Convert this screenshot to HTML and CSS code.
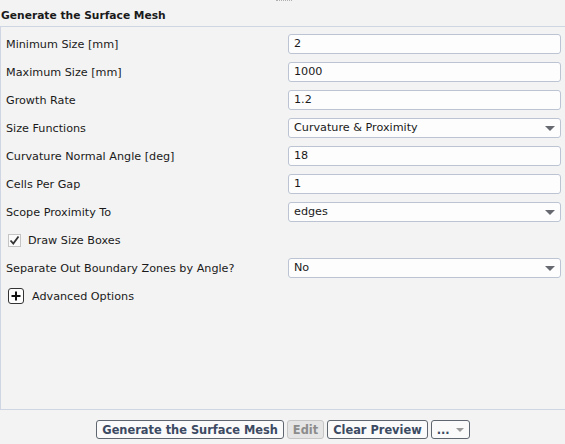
FILE: index.html
```html
<!DOCTYPE html>
<html>
<head>
<meta charset="utf-8">
<link rel="stylesheet" href="styles.css">
</head>
<body>
<div class="grip"></div>
<div class="title">Generate the Surface Mesh</div>
<div class="panel">
  <div class="row"><span class="label">Minimum Size [mm]</span><div class="field">2</div></div>
  <div class="row"><span class="label">Maximum Size [mm]</span><div class="field">1000</div></div>
  <div class="row"><span class="label">Growth Rate</span><div class="field">1.2</div></div>
  <div class="row"><span class="label">Size Functions</span><div class="field select">Curvature &amp; Proximity<span class="caret"></span></div></div>
  <div class="row"><span class="label">Curvature Normal Angle [deg]</span><div class="field">18</div></div>
  <div class="row"><span class="label">Cells Per Gap</span><div class="field">1</div></div>
  <div class="row"><span class="label">Scope Proximity To</span><div class="field select">edges<span class="caret"></span></div></div>
  <div class="row check-row"><span class="checkbox"><svg width="11" height="11" viewBox="0 0 11 11"><path d="M1.5 5.5 L4.3 8.6 L9.5 1.5" fill="none" stroke="#333" stroke-width="1.8"/></svg></span><span>Draw Size Boxes</span></div>
  <div class="row"><span class="label">Separate Out Boundary Zones by Angle?</span><div class="field select">No<span class="caret"></span></div></div>
  <div class="row check-row"><span class="plus"><svg width="10" height="10" viewBox="0 0 10 10"><path d="M5 0.5 V9.5 M0.5 5 H9.5" stroke="#111" stroke-width="2"/></svg></span><span>Advanced Options</span></div>
</div>
<div class="footer">
  <button class="btn">Generate the Surface Mesh</button>
  <button class="btn disabled">Edit</button>
  <button class="btn">Clear Preview</button>
  <button class="btn more">...<span class="caret small"></span></button>
</div>
</body>
</html>
```
FILE: styles.css
```css
html, body {
  margin: 0;
  padding: 0;
  background: #f3f3f3;
  width: 565px;
  height: 444px;
  overflow: hidden;
  font-family: "DejaVu Sans", sans-serif;
  font-size: 11.2px;
  color: #1a1a1a;
}
.grip {
  position: absolute;
  left: 276px;
  top: 0;
  width: 16px;
  height: 1px;
  border-top: 1px dotted #b0b0b0;
}
.title {
  height: 27px;
  line-height: 31px;
  padding-left: 1px;
  font-size: 10.7px;
  font-weight: bold;
  color: #1a1a1a;
  box-sizing: border-box;
  border-bottom: 1px solid #cfd5e2;
}
.panel {
  height: 383px;
  box-sizing: border-box;
  border-left: 1px solid #cfd5e2;
  border-bottom: 1px solid #cfd5e2;
  padding-top: 7px;
}
.row {
  display: flex;
  align-items: center;
  height: 20px;
  margin-bottom: 8px;
  padding-left: 5px;
}
.label {
  width: 282px;
  flex: none;
}
.field {
  position: relative;
  width: 273px;
  height: 20px;
  box-sizing: border-box;
  border: 1px solid #bcc4d4;
  border-radius: 3px;
  background: #fdfdfd;
  padding-left: 5px;
  line-height: 18px;
}
.caret {
  position: absolute;
  right: 5px;
  top: 7px;
  width: 0;
  height: 0;
  border-left: 5px solid transparent;
  border-right: 5px solid transparent;
  border-top: 5px solid #666a70;
}
.check-row {
  padding-left: 7px;
}
.checkbox {
  width: 13px;
  height: 13px;
  box-sizing: border-box;
  border: 1px solid #c4c4c4;
  background: #fbfbfb;
  display: flex;
  align-items: center;
  justify-content: center;
  margin-right: 7px;
}
.plus {
  width: 16px;
  height: 16px;
  box-sizing: border-box;
  border: 1px solid #333;
  border-radius: 3px;
  background: #fdfdfd;
  display: flex;
  align-items: center;
  justify-content: center;
  margin-right: 8px;
}
.footer {
  display: flex;
  justify-content: center;
  gap: 3px;
  padding-top: 10px;
  padding-left: 1px;
}
.btn {
  position: relative;
  font-family: "DejaVu Sans", sans-serif;
  font-size: 11.4px;
  font-weight: bold;
  color: #3c4a63;
  height: 19px;
  padding: 0 5px;
  border: 1px solid #5f6670;
  border-radius: 3px;
  background: #fafafa;
  line-height: 16px;
  margin: 0;
}
.btn.disabled {
  color: #8c8c8c;
  background: #e5e5e5;
  border-color: #c6c6c6;
}
.btn.more {
  width: 39px;
  text-align: left;
  padding-left: 5px;
}
.caret.small {
  top: 7px;
  right: 5px;
  border-left-width: 4px;
  border-right-width: 4px;
  border-top-width: 4px;
  border-top-color: #9a9a9a;
}
```
